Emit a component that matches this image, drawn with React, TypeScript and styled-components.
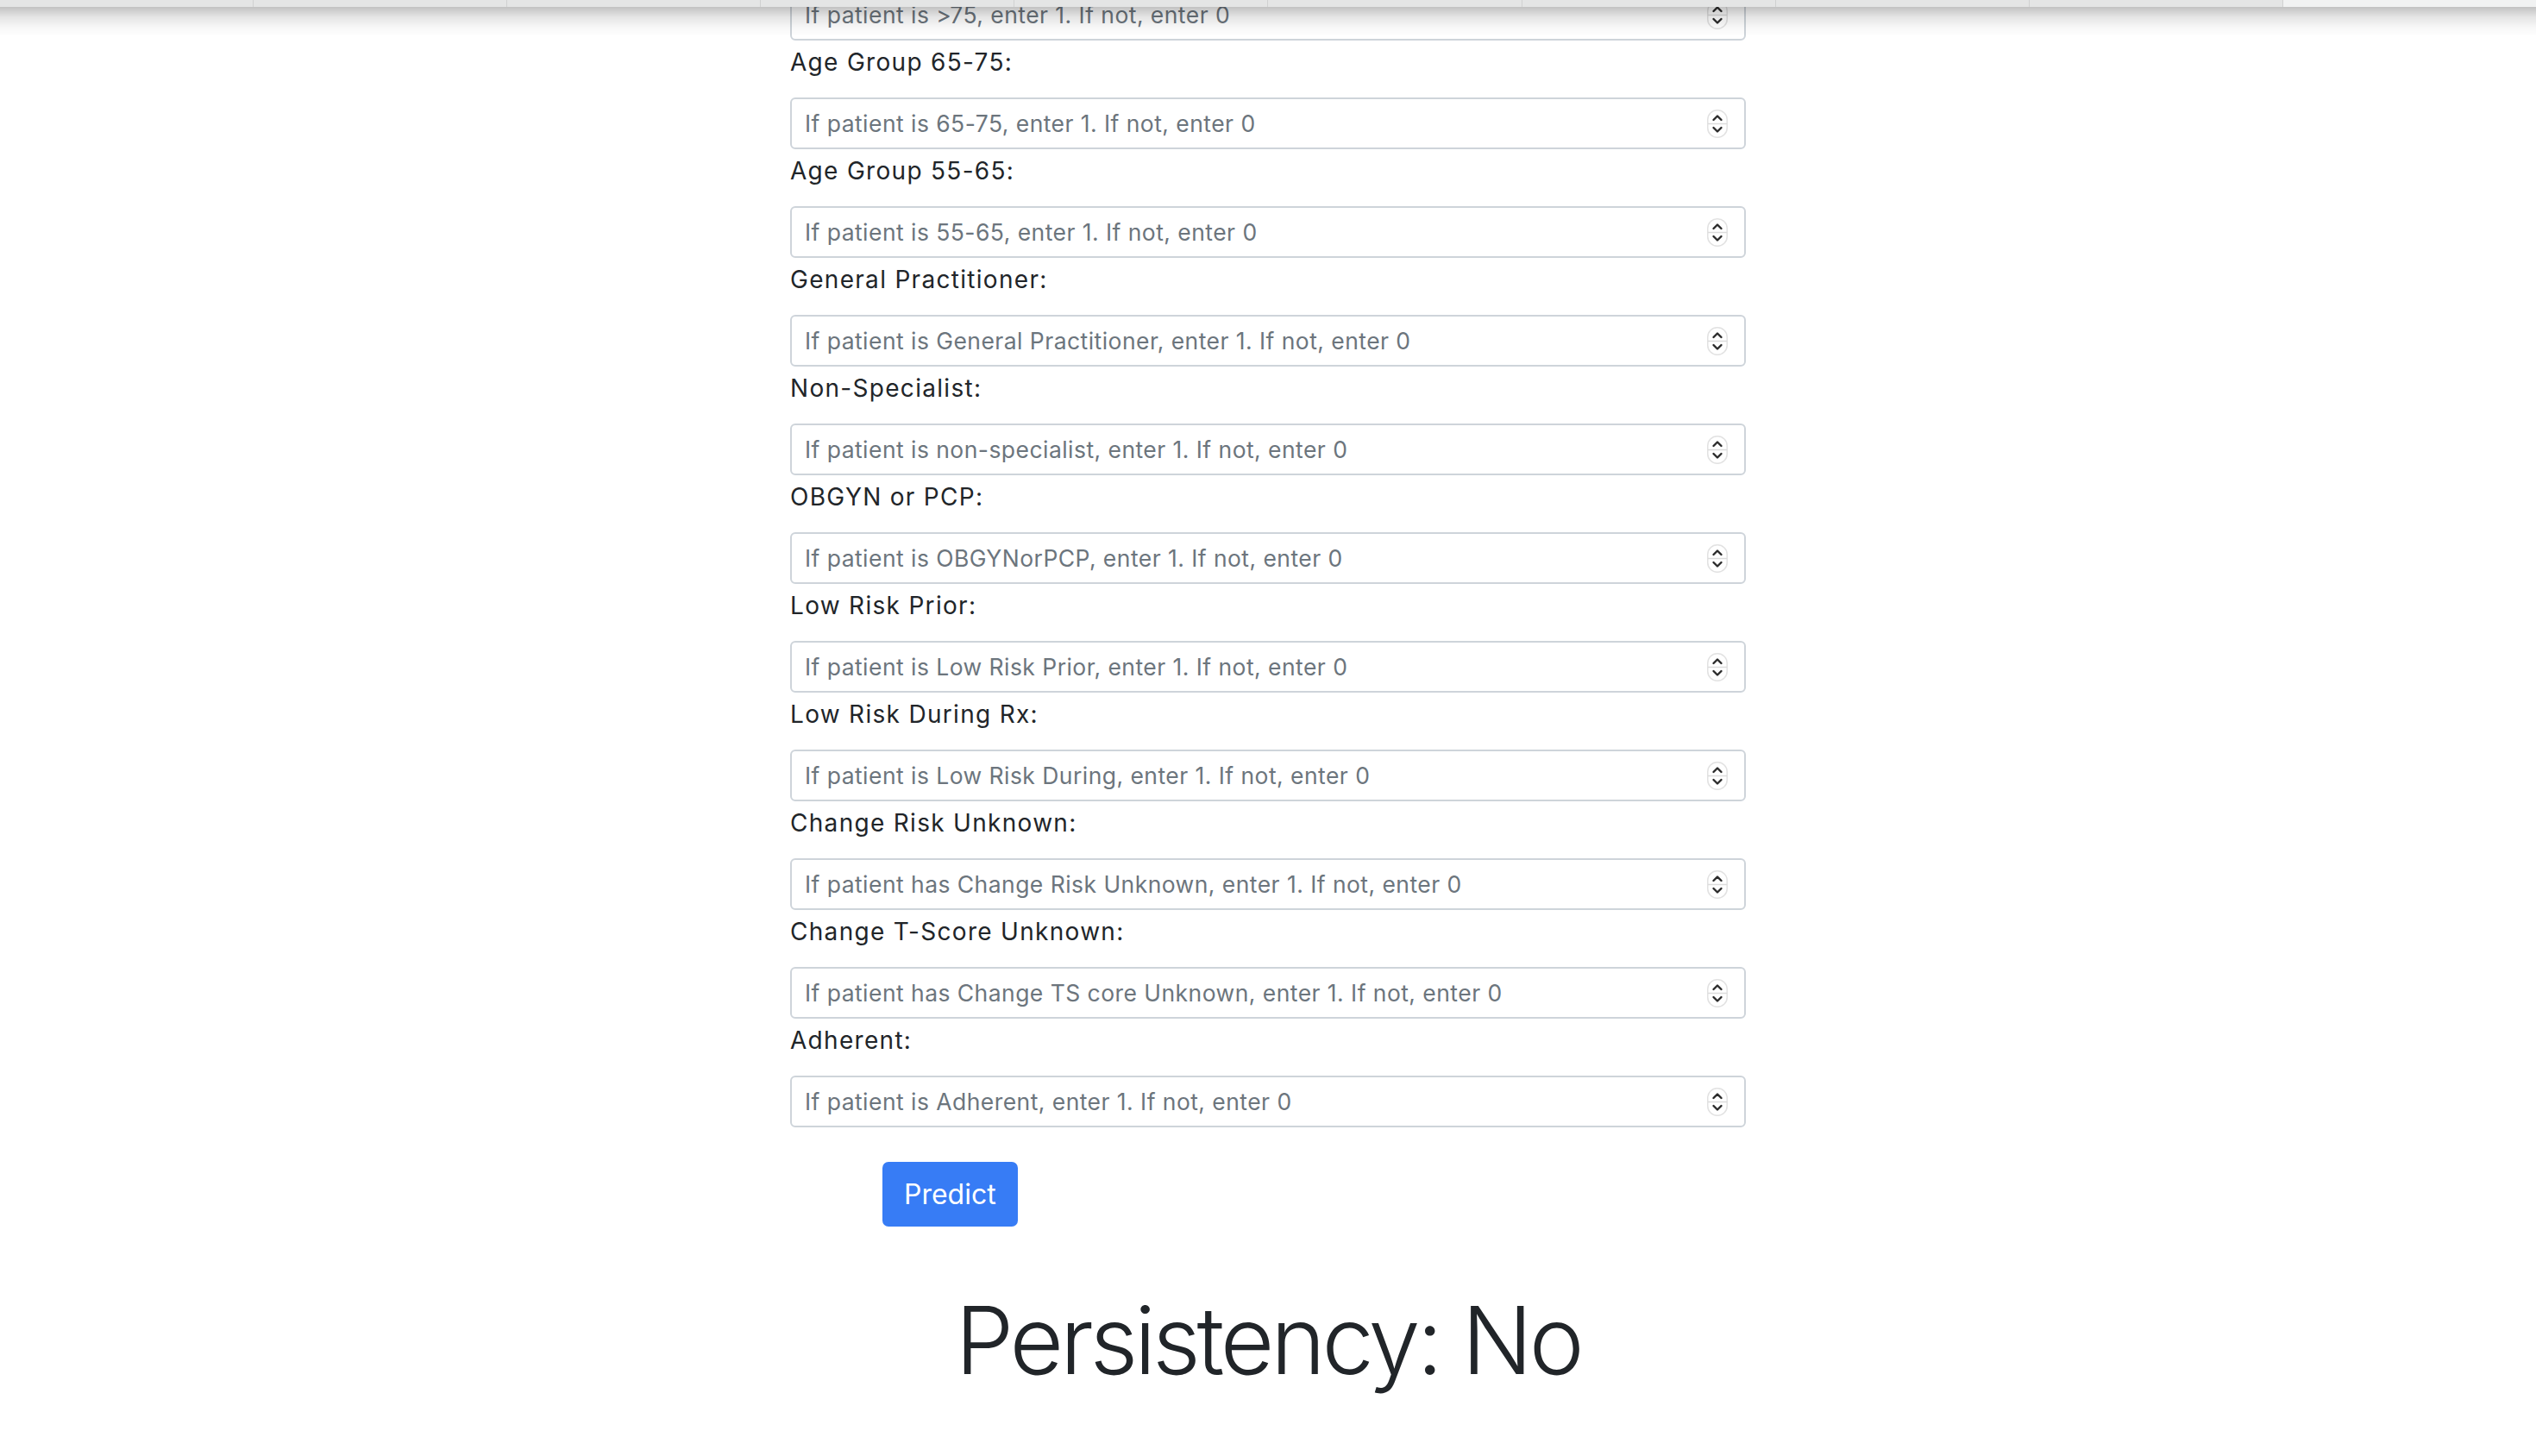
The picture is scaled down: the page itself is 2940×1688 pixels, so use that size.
import React from 'react';
import styled, { createGlobalStyle } from 'styled-components';

const fields = [
  { id: 'age6575', label: 'Age Group 65-75:', placeholder: 'If patient is 65-75, enter 1. If not, enter 0' },
  { id: 'age5565', label: 'Age Group 55-65:', placeholder: 'If patient is 55-65, enter 1. If not, enter 0' },
  { id: 'gp', label: 'General Practitioner:', placeholder: 'If patient is General Practitioner, enter 1. If not, enter 0' },
  { id: 'nonspec', label: 'Non-Specialist:', placeholder: 'If patient is non-specialist, enter 1. If not, enter 0' },
  { id: 'obgyn', label: 'OBGYN or PCP:', placeholder: 'If patient is OBGYNorPCP, enter 1. If not, enter 0' },
  { id: 'lowprior', label: 'Low Risk Prior:', placeholder: 'If patient is Low Risk Prior, enter 1. If not, enter 0' },
  { id: 'lowduring', label: 'Low Risk During Rx:', placeholder: 'If patient is Low Risk During, enter 1. If not, enter 0' },
  { id: 'riskunk', label: 'Change Risk Unknown:', placeholder: 'If patient has Change Risk Unknown, enter 1. If not, enter 0' },
  { id: 'tscoreunk', label: 'Change T-Score Unknown:', placeholder: 'If patient has Change TS core Unknown, enter 1. If not, enter 0' },
  { id: 'adherent', label: 'Adherent:', placeholder: 'If patient is Adherent, enter 1. If not, enter 0' },
];

const GlobalStyle = createGlobalStyle`
  html, body {
    margin: 0;
    padding: 0;
    background: #ffffff;
  }
  body {
    font-family: Inter, "Liberation Sans", sans-serif;
    color: #212529;
    overflow: hidden;
  }
`;

// browser tab strip peeking in at the top, with its drop shadow over the page
const TabStrip = styled.div`
  position: fixed;
  top: 0;
  left: 0;
  right: 0;
  height: 8px;
  display: flex;
  z-index: 10;

  &::after {
    content: '';
    position: absolute;
    top: 8px;
    left: 0;
    right: 0;
    height: 34px;
    background: linear-gradient(
      rgba(0, 0, 0, 0.24),
      rgba(0, 0, 0, 0.1) 35%,
      rgba(0, 0, 0, 0.03) 70%,
      rgba(0, 0, 0, 0)
    );
    pointer-events: none;
  }
`;

const Tab = styled.div<{ $active?: boolean }>`
  flex: 1;
  background: ${({ $active }) => ($active ? '#f1f2f2' : '#e4e5e5')};
  border-left: 1px solid #d0d1d1;

  &:first-child {
    border-left: none;
  }
`;

const Page = styled.main`
  display: flex;
  flex-direction: column;
  align-items: center;
`;

const Form = styled.form`
  width: 1108px;
  margin-top: -13px;
  display: flex;
  flex-direction: column;
`;

const Label = styled.label`
  display: block;
  font-size: 28px;
  letter-spacing: 1.3px;
  line-height: 38px;
  padding-top: 6px;
  margin-bottom: 22px;
  color: #212529;
`;

const Control = styled.div`
  display: flex;
  align-items: center;
  height: 60px;
  box-sizing: border-box;
  border: 2px solid #ced4da;
  border-radius: 6px;
  padding: 0 19px 0 15px;
  background: #fff;
`;

const Input = styled.input`
  flex: 1;
  min-width: 0;
  border: none;
  outline: none;
  padding: 0;
  background: transparent;
  font-family: inherit;
  font-size: 26.5px;
  letter-spacing: 0.45px;
  color: #495057;

  &::placeholder {
    color: #6c757d;
    opacity: 1;
  }
`;

const Spinner = styled.svg`
  flex: none;
  width: 24px;
  height: 33px;
`;

const PredictButton = styled.button`
  align-self: flex-start;
  margin: 40px 0 0 107px;
  height: 75px;
  padding: 0 25px;
  border: none;
  border-radius: 7px;
  background: #377cf5;
  color: #ffffff;
  font-family: inherit;
  font-size: 32px;
  cursor: pointer;
`;

const Result = styled.h1`
  margin: 67px 0 0 0;
  font-size: 108px;
  font-weight: 300;
  letter-spacing: -4.2px;
  line-height: 1.2;
  color: #212529;
  text-align: center;
`;

const SpinIcon = () => (
  <Spinner viewBox="0 0 24 33">
    <rect x="0.75" y="0.75" width="22.5" height="31.5" rx="11" fill="#fff" stroke="#e2e2e2" strokeWidth="1.5" />
    <line x1="1" y1="16.5" x2="23" y2="16.5" stroke="#dcdcdc" strokeWidth="1.5" />
    <polyline points="7.5,12 12,7.5 16.5,12" fill="none" stroke="#2a2a2a" strokeWidth="2.4" strokeLinecap="round" strokeLinejoin="round" />
    <polyline points="7.5,21 12,25.5 16.5,21" fill="none" stroke="#2a2a2a" strokeWidth="2.4" strokeLinecap="round" strokeLinejoin="round" />
  </Spinner>
);

const App: React.FC = () => {
  return (
    <>
      <GlobalStyle />
      <TabStrip>
        {Array.from({ length: 10 }).map((_, i) => (
          <Tab key={i} $active={i === 9} />
        ))}
      </TabStrip>
      <Page>
        <Form onSubmit={e => e.preventDefault()}>
          <Control>
            <Input type="text" placeholder="If patient is >75, enter 1. If not, enter 0" />
            <SpinIcon />
          </Control>
          {fields.map(field => (
            <React.Fragment key={field.id}>
              <Label htmlFor={field.id}>{field.label}</Label>
              <Control>
                <Input id={field.id} type="text" placeholder={field.placeholder} />
                <SpinIcon />
              </Control>
            </React.Fragment>
          ))}
          <PredictButton type="submit">Predict</PredictButton>
        </Form>
        <Result>Persistency: No</Result>
      </Page>
    </>
  );
};

export default App;
